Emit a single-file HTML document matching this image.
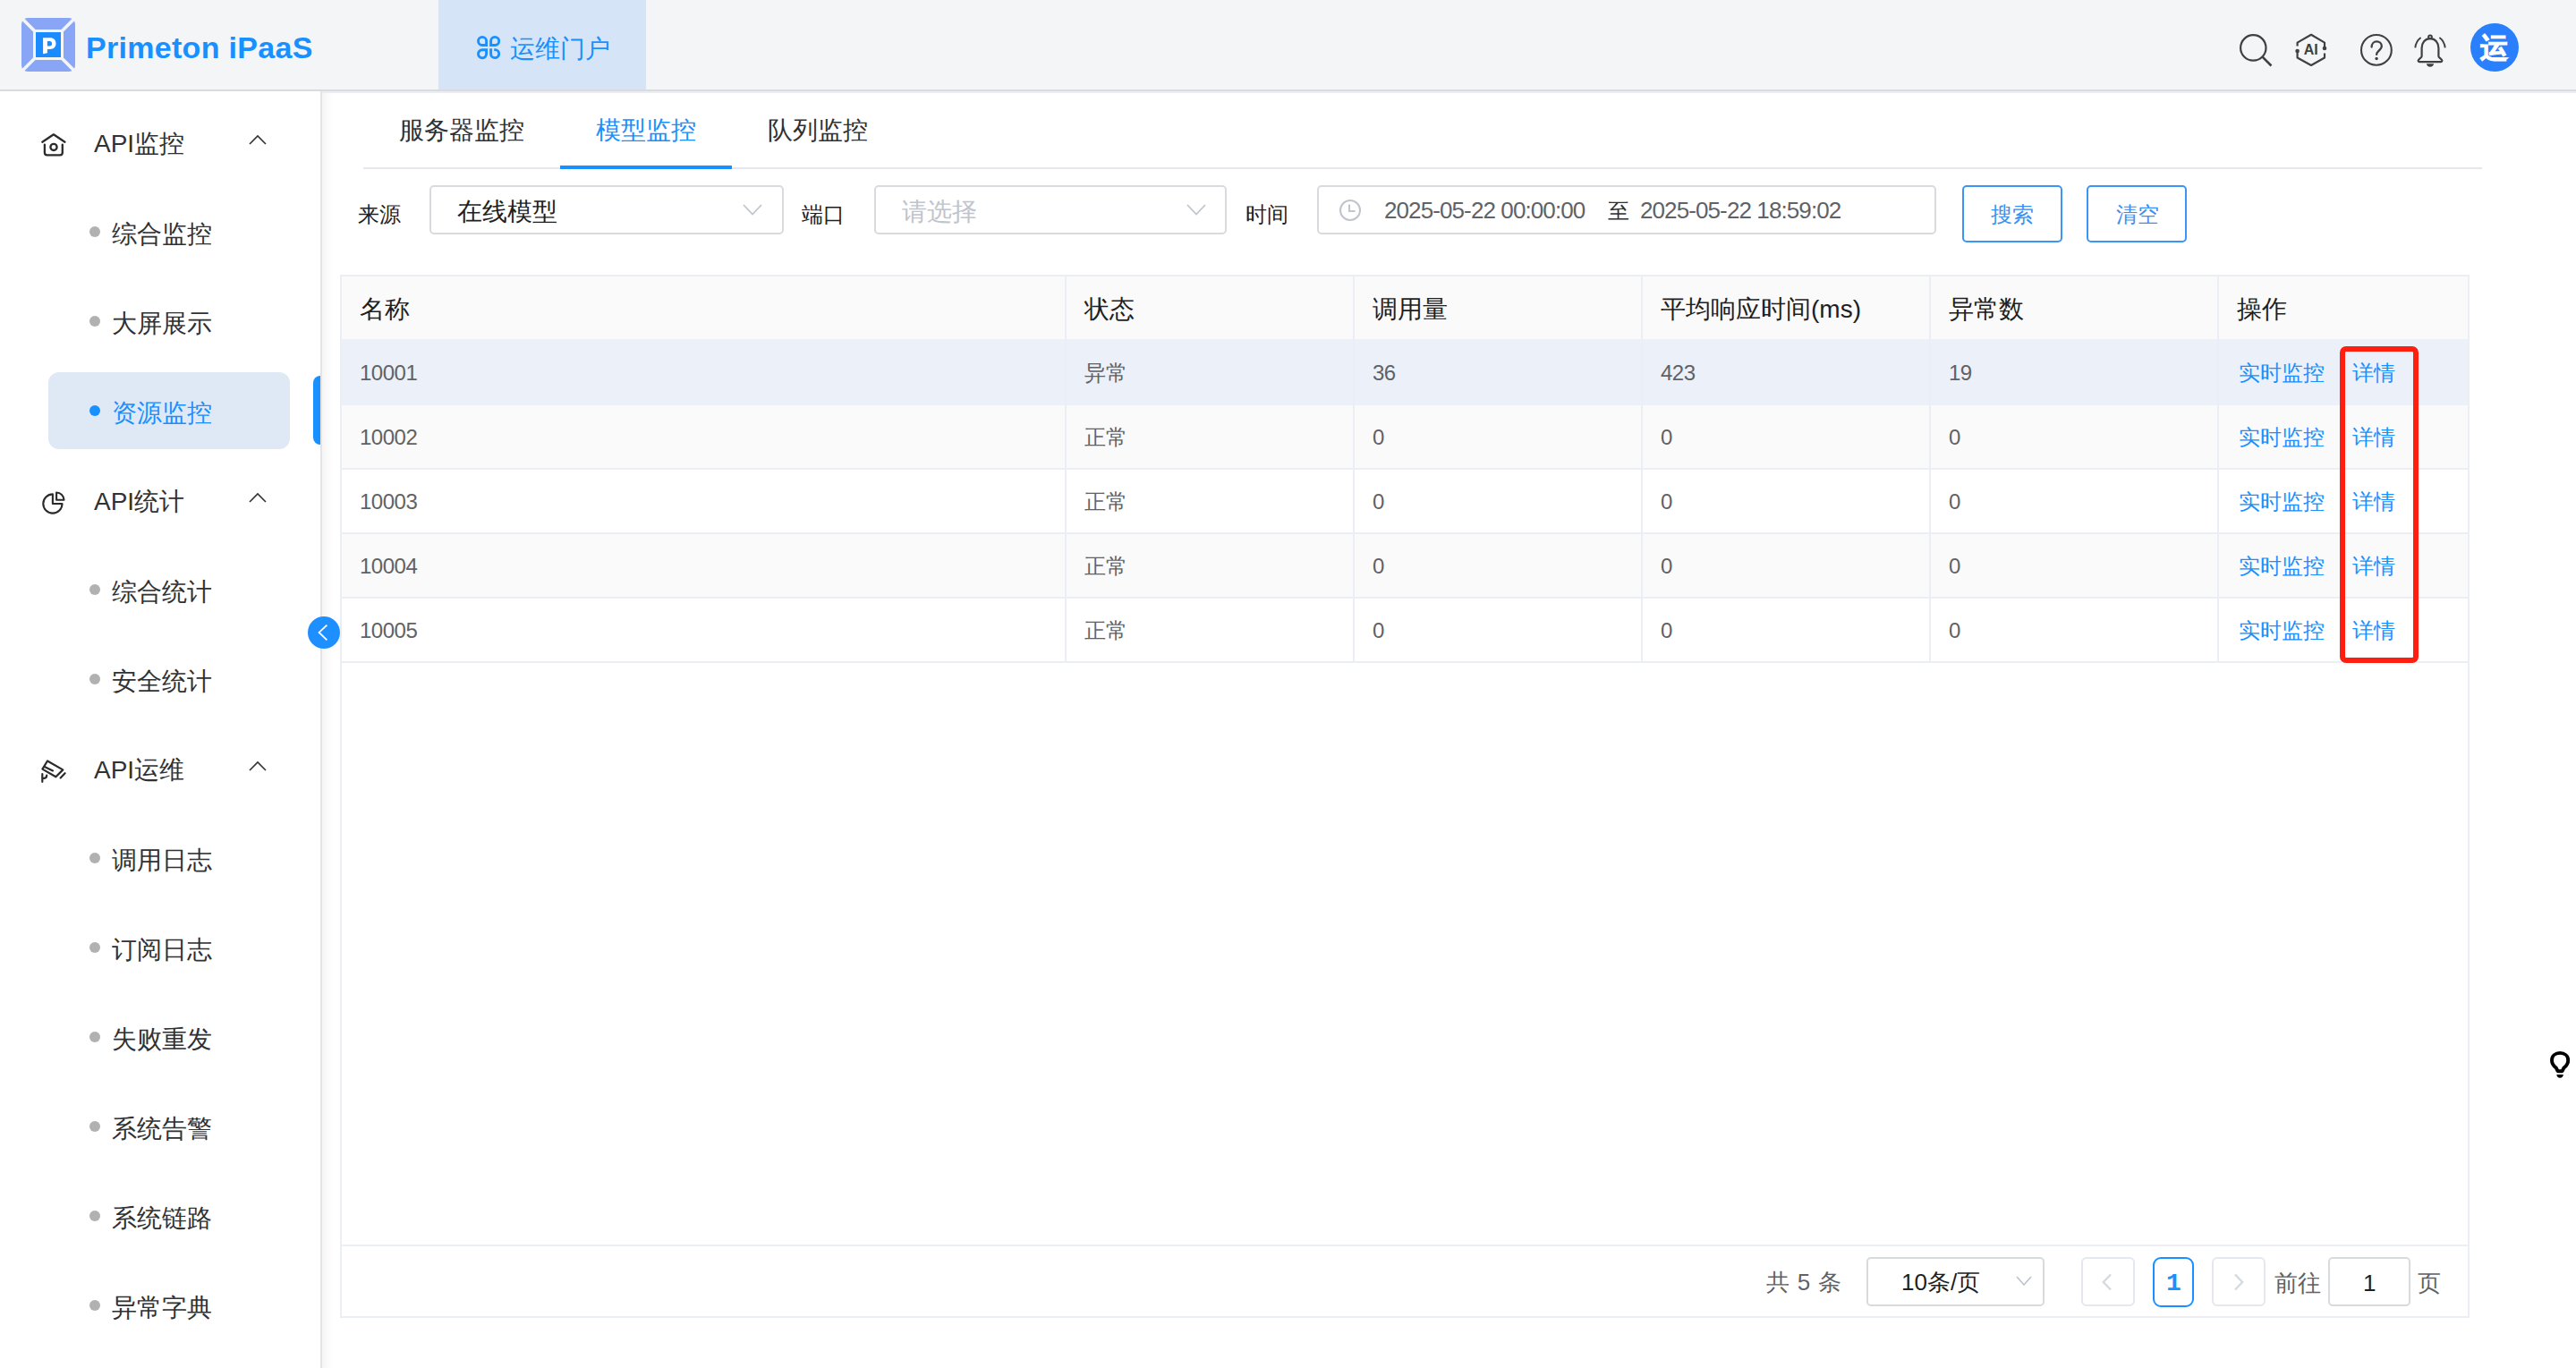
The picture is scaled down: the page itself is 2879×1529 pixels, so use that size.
<!DOCTYPE html>
<html><head><meta charset="utf-8">
<style>
*{box-sizing:border-box;margin:0;padding:0}
html,body{width:2879px;height:1529px;overflow:hidden;background:#fff;font-family:"Liberation Sans",sans-serif;color:#303133}
.a{position:absolute}
.t{position:absolute;white-space:nowrap;line-height:1}
#hdr{left:0;top:0;width:2879px;height:100px;background:#f4f5f7}
#hdrb{left:0;top:100px;width:2879px;height:2px;background:#dadbdd}
#hdrs{left:0;top:102px;width:2879px;height:2px;background:#e9eef6}
#side{left:0;top:102px;width:358px;height:1427px;background:#fff}
#sideb{left:358px;top:102px;width:2px;height:1427px;background:#e4e4e6}
#shadow{left:360px;top:104px;width:12px;height:1425px;background:linear-gradient(to right,#f5f5f6,#fff)}
.mh{font-size:28px;color:#303133}
.mi{font-size:28px;color:#303133}
.dot{position:absolute;width:12px;height:12px;border-radius:6px;background:#b1b1b1}
.chev{position:absolute}
.lbl{font-size:24px;color:#1f1f1f}
.inp{position:absolute;border:2px solid #d8dadd;border-radius:5px;background:#fff}
.cell{font-size:24px;color:#606266;letter-spacing:-0.5px}
.th{font-size:28px;color:#1f1f1f}
.lnk{font-size:24px;color:#1890ff}
.rowb{position:absolute;left:382px;width:2376px;height:2px;background:#ebeef5}
.colb{position:absolute;width:2px;background:#ebeef5}
</style></head><body>
<!-- HEADER -->
<div id="hdr" class="a"></div>
<div id="hdrb" class="a"></div>
<div id="hdrs" class="a"></div>
<svg class="a" style="left:24px;top:20px" width="60" height="60" viewBox="0 0 60 60">
  <rect x="0" y="0" width="60" height="60" rx="7" fill="#89a6f6"/>
  <line x1="0" y1="0" x2="60" y2="60" stroke="#f4f5f7" stroke-width="3.6"/>
  <line x1="60" y1="0" x2="0" y2="60" stroke="#f4f5f7" stroke-width="3.6"/>
  <rect x="13" y="13" width="34" height="34" fill="#f4f5f7"/>
  <rect x="16" y="16" width="28" height="28" fill="#1a8cff"/>
  <path fill-rule="evenodd" d="M24.1 22.3 H32 C36 22.3 38.5 24.6 38.5 28.6 C38.5 32.5 36 35 32 35 H28.9 V39.2 L24.1 40.2 Z M28.9 26 V31.6 H31.3 C33.1 31.6 34.1 30.6 34.1 28.8 C34.1 27 33.1 26 31.3 26 Z" fill="#fff"/>
</svg>
<div class="t" style="left:96px;top:36px;font-size:34px;font-weight:bold;color:#1890ff;letter-spacing:0.3px">Primeton iPaaS</div>

<div class="a" style="left:490px;top:0;width:232px;height:100px;background:#d5e5f7"></div>
<svg class="a" style="left:528px;top:36px" width="36" height="36" viewBox="0 0 36 36" fill="none" stroke="#1890ff" stroke-width="2.9">
  <path d="M15.6 14.45 H11.05 A4.55 4.55 0 1 1 15.6 9.9 Z"/>
  <path d="M20.6 14.45 H25.65 A4.55 4.55 0 1 0 20.6 9.9 Z"/>
  <path d="M15.6 19.7 H11.05 A4.55 4.55 0 1 0 15.6 24.15 Z"/>
  <path d="M20.6 18.3 V24.15 A4.55 4.55 0 1 0 25.65 19.6 H24.2"/>
</svg>
<div class="t" style="left:570px;top:41px;font-size:28px;color:#1890ff">运维门户</div>

<!-- right icons -->
<svg class="a" style="left:2496px;top:32px" width="50" height="50" viewBox="0 0 50 50" fill="none" stroke="#404040" stroke-width="2.2">
  <circle cx="22.3" cy="21.4" r="14.2"/>
  <line x1="32.6" y1="31.6" x2="42.5" y2="41.5" stroke-width="2.6"/>
</svg>
<svg class="a" style="left:2558px;top:32px" width="50" height="50" viewBox="0 0 50 50" fill="none" stroke="#404040" stroke-width="2.2" stroke-linejoin="round">
  <path d="M9.6 19.5 V15.6 L25 6.8 L40 15.6 V21.5"/>
  <path d="M40 27.6 V32.5 L25 41 L9.6 32.5 V26.5"/>
  <circle cx="9.6" cy="25" r="2.3" fill="#404040" stroke="none"/>
  <circle cx="40" cy="22" r="2.3" fill="#404040" stroke="none"/>
  <text x="24.8" y="28.8" text-anchor="middle" font-family="Liberation Sans" font-weight="bold" font-size="16" fill="#404040" stroke="none">AI</text>
</svg>
<svg class="a" style="left:2631px;top:31px" width="50" height="50" viewBox="0 0 50 50" fill="none" stroke="#404040" stroke-width="2.2">
  <circle cx="24.9" cy="24.9" r="16.9" stroke-width="2.1"/>
  <path d="M19.6 21.6 C19.6 18 22 15.4 25.2 15.4 C28.4 15.4 30.8 17.6 30.8 20.6 C30.8 23 28.8 24.8 26.8 26.6 C25.6 27.7 25.1 28.6 25.1 29.9" stroke-width="2.3" stroke-linecap="round"/>
  <circle cx="25.1" cy="34.5" r="1.7" fill="#404040" stroke="none"/>
</svg>
<svg class="a" style="left:2691px;top:31px" width="50" height="50" viewBox="0 0 50 50" fill="none" stroke="#404040" stroke-width="2.2">
  <path d="M25 12.2 c-5.8 0 -9.4 4.6 -9.4 10.6 v9.2 c0 1.6 -3.9 3.2 -3.9 4.6 c0 1 0.7 1.6 1.6 1.6 h23.4 c0.9 0 1.6 -0.6 1.6 -1.6 c0 -1.4 -3.9 -3 -3.9 -4.6 v-9.2 c0 -6 -3.6 -10.6 -9.4 -10.6 z"/>
  <circle cx="25" cy="10.3" r="1.9" stroke-width="2"/>
  <path d="M21 40.3 h8 c0 2 -1.8 3.5 -4 3.5 c-2.2 0 -4 -1.5 -4 -3.5 z" fill="#404040" stroke="none"/>
  <path d="M14.6 11 c-3.5 2.6 -5.8 6.5 -6.3 11.3" stroke-width="1.9"/>
  <path d="M35.4 11 c3.5 2.6 5.8 6.5 6.3 11.3" stroke-width="1.9"/>
</svg>
<div class="a" style="left:2761px;top:26px;width:54px;height:54px;border-radius:27px;background:#2a7ffc"></div>
<div class="t" style="left:2772px;top:38px;font-size:31px;font-weight:bold;color:#fff;-webkit-text-stroke:1px #fff">运</div>

<!-- SIDEBAR -->
<div id="side" class="a"></div>
<div id="sideb" class="a"></div>
<div id="shadow" class="a"></div>

<svg class="a" style="left:40px;top:142px" width="40" height="40" viewBox="0 0 40 40" fill="none" stroke="#2b2b2b" stroke-width="2.3" stroke-linejoin="round" stroke-linecap="round">
  <path d="M7.3 16.7 L19.9 8.3 L32.5 16.7"/>
  <path d="M9.9 19.6 V28.6 C9.9 30.2 11 31.4 12.6 31.4 H27.1 C28.7 31.4 29.8 30.2 29.8 28.6 V19.6"/>
  <circle cx="20" cy="22.4" r="3.6"/>
</svg>
<div class="t mh" style="left:105px;top:147px">API监控</div>
<svg class="chev" style="left:277px;top:149px" width="22" height="14" viewBox="0 0 22 14" fill="none" stroke="#333" stroke-width="1.6"><path d="M2 12 L11 3 L20 12"/></svg>

<div class="dot" style="left:100px;top:253px"></div>
<div class="t mi" style="left:125px;top:248px">综合监控</div>
<div class="dot" style="left:100px;top:353px"></div>
<div class="t mi" style="left:125px;top:348px">大屏展示</div>
<div class="a" style="left:54px;top:416px;width:270px;height:86px;border-radius:12px;background:#dfe9f6"></div>
<div class="a" style="left:350px;top:420px;width:8px;height:77px;border-radius:8px 0 0 8px;background:#1890ff"></div>
<div class="dot" style="left:100px;top:453px;background:#1890ff"></div>
<div class="t mi" style="left:125px;top:448px;color:#1890ff">资源监控</div>

<svg class="a" style="left:40px;top:542px" width="40" height="40" viewBox="0 0 40 40" fill="none" stroke="#2b2b2b" stroke-width="2.1" stroke-linejoin="round">
  <path d="M18.9 10.4 A10.6 10.6 0 1 0 29.5 21 H18.9 Z"/>
  <path d="M23.1 8.5 V16.8 H31.5 A8.3 8.3 0 0 0 23.1 8.5 Z"/>
</svg>
<div class="t mh" style="left:105px;top:547px">API统计</div>
<svg class="chev" style="left:277px;top:549px" width="22" height="14" viewBox="0 0 22 14" fill="none" stroke="#333" stroke-width="1.6"><path d="M2 12 L11 3 L20 12"/></svg>
<div class="dot" style="left:100px;top:653px"></div>
<div class="t mi" style="left:125px;top:648px">综合统计</div>
<div class="dot" style="left:100px;top:753px"></div>
<div class="t mi" style="left:125px;top:748px">安全统计</div>

<svg class="a" style="left:40px;top:840px" width="40" height="40" viewBox="0 0 40 40" fill="none" stroke="#2b2b2b" stroke-width="2.2" stroke-linejoin="round" stroke-linecap="round">
  <path d="M13 10.5 L30.3 20.4 L22.4 28.3 L7.4 19.6 Z"/>
  <path d="M9.8 16.9 L19 21.4"/>
  <path d="M7.3 25.2 V33.8 M7.3 29.8 H9.5 C11 29.8 12.2 28.6 12.2 26.6"/>
  <path d="M32.6 24.2 L27.6 29.4"/>
</svg>
<div class="t mh" style="left:105px;top:847px">API运维</div>
<svg class="chev" style="left:277px;top:849px" width="22" height="14" viewBox="0 0 22 14" fill="none" stroke="#333" stroke-width="1.6"><path d="M2 12 L11 3 L20 12"/></svg>
<div class="dot" style="left:100px;top:953px"></div>
<div class="t mi" style="left:125px;top:948px">调用日志</div>
<div class="dot" style="left:100px;top:1053px"></div>
<div class="t mi" style="left:125px;top:1048px">订阅日志</div>
<div class="dot" style="left:100px;top:1153px"></div>
<div class="t mi" style="left:125px;top:1148px">失败重发</div>
<div class="dot" style="left:100px;top:1253px"></div>
<div class="t mi" style="left:125px;top:1248px">系统告警</div>
<div class="dot" style="left:100px;top:1353px"></div>
<div class="t mi" style="left:125px;top:1348px">系统链路</div>
<div class="dot" style="left:100px;top:1453px"></div>
<div class="t mi" style="left:125px;top:1448px">异常字典</div>

<!-- MAIN TABS -->
<div class="a" style="left:406px;top:187px;width:2368px;height:2px;background:#e4e7ed"></div>
<div class="a" style="left:626px;top:185px;width:192px;height:4px;background:#1890ff"></div>
<div class="t" style="left:446px;top:132px;font-size:28px;color:#303133">服务器监控</div>
<div class="t" style="left:666px;top:132px;font-size:28px;color:#1890ff">模型监控</div>
<div class="t" style="left:858px;top:132px;font-size:28px;color:#303133">队列监控</div>

<!-- FILTERS -->
<div class="t lbl" style="left:400px;top:228px">来源</div>
<div class="inp" style="left:480px;top:207px;width:396px;height:55px"></div>
<div class="t" style="left:511px;top:223px;font-size:28px;color:#1f1f1f">在线模型</div>
<svg class="a" style="left:828px;top:226px" width="26" height="18" viewBox="0 0 26 18" fill="none" stroke="#c0c4cc" stroke-width="1.8"><path d="M3 3 L13 13.5 L23 3"/></svg>

<div class="t lbl" style="left:896px;top:228px">端口</div>
<div class="inp" style="left:977px;top:207px;width:394px;height:55px"></div>
<div class="t" style="left:1008px;top:223px;font-size:28px;color:#c0c4cc">请选择</div>
<svg class="a" style="left:1324px;top:226px" width="26" height="18" viewBox="0 0 26 18" fill="none" stroke="#c0c4cc" stroke-width="1.8"><path d="M3 3 L13 13.5 L23 3"/></svg>

<div class="t lbl" style="left:1392px;top:228px">时间</div>
<div class="inp" style="left:1472px;top:207px;width:692px;height:55px"></div>
<svg class="a" style="left:1495px;top:221px" width="28" height="28" viewBox="0 0 28 28" fill="none" stroke="#c0c4cc" stroke-width="2"><circle cx="14" cy="14" r="11"/><path d="M13 7.5 V15 H19.5"/></svg>
<div class="t" style="left:1547px;top:222px;font-size:26px;color:#606266;letter-spacing:-0.9px">2025-05-22 00:00:00</div>
<div class="t" style="left:1797px;top:224px;font-size:24px;color:#303133">至</div>
<div class="t" style="left:1833px;top:222px;font-size:26px;color:#606266;letter-spacing:-0.9px">2025-05-22 18:59:02</div>

<div class="a" style="left:2193px;top:207px;width:112px;height:64px;border:2px solid #3a95f7;border-radius:5px"></div>
<div class="t" style="left:2225px;top:228px;font-size:24px;color:#3a90f2">搜索</div>
<div class="a" style="left:2332px;top:207px;width:112px;height:64px;border:2px solid #3a95f7;border-radius:5px"></div>
<div class="t" style="left:2365px;top:228px;font-size:24px;color:#3a90f2">清空</div>

<!-- TABLE -->
<div class="a" style="left:380px;top:307px;width:2380px;height:1166px;border:2px solid #ebeef5;background:#fff"></div>
<div class="a" style="left:382px;top:309px;width:2376px;height:70px;background:#fafafa"></div>
<div class="a" style="left:382px;top:379px;width:2376px;height:74px;background:#ecf0f8"></div>
<div class="a" style="left:382px;top:453px;width:2376px;height:70px;background:#fafafa"></div>
<div class="a" style="left:382px;top:597px;width:2376px;height:70px;background:#fafafa"></div>
<div class="rowb" style="top:523px"></div>
<div class="rowb" style="top:595px"></div>
<div class="rowb" style="top:667px"></div>
<div class="rowb" style="top:739px"></div>
<div class="rowb" style="top:1391px"></div>
<div class="colb" style="left:1190px;top:309px;height:430px"></div>
<div class="colb" style="left:1512px;top:309px;height:430px"></div>
<div class="colb" style="left:1834px;top:309px;height:430px"></div>
<div class="colb" style="left:2156px;top:309px;height:430px"></div>
<div class="colb" style="left:2478px;top:309px;height:430px"></div>

<div class="t th" style="left:402px;top:332px">名称</div>
<div class="t th" style="left:1212px;top:332px">状态</div>
<div class="t th" style="left:1534px;top:332px">调用量</div>
<div class="t th" style="left:1856px;top:332px">平均响应时间(ms)</div>
<div class="t th" style="left:2178px;top:332px">异常数</div>
<div class="t th" style="left:2500px;top:332px">操作</div>

<div class="t cell" style="left:402px;top:405px">10001</div>
<div class="t cell" style="left:1212px;top:405px">异常</div>
<div class="t cell" style="left:1534px;top:405px">36</div>
<div class="t cell" style="left:1856px;top:405px">423</div>
<div class="t cell" style="left:2178px;top:405px">19</div>
<div class="t lnk" style="left:2502px;top:405px">实时监控</div>
<div class="t lnk" style="left:2629px;top:405px">详情</div>
<div class="t cell" style="left:402px;top:477px">10002</div>
<div class="t cell" style="left:1212px;top:477px">正常</div>
<div class="t cell" style="left:1534px;top:477px">0</div>
<div class="t cell" style="left:1856px;top:477px">0</div>
<div class="t cell" style="left:2178px;top:477px">0</div>
<div class="t lnk" style="left:2502px;top:477px">实时监控</div>
<div class="t lnk" style="left:2629px;top:477px">详情</div>
<div class="t cell" style="left:402px;top:549px">10003</div>
<div class="t cell" style="left:1212px;top:549px">正常</div>
<div class="t cell" style="left:1534px;top:549px">0</div>
<div class="t cell" style="left:1856px;top:549px">0</div>
<div class="t cell" style="left:2178px;top:549px">0</div>
<div class="t lnk" style="left:2502px;top:549px">实时监控</div>
<div class="t lnk" style="left:2629px;top:549px">详情</div>
<div class="t cell" style="left:402px;top:621px">10004</div>
<div class="t cell" style="left:1212px;top:621px">正常</div>
<div class="t cell" style="left:1534px;top:621px">0</div>
<div class="t cell" style="left:1856px;top:621px">0</div>
<div class="t cell" style="left:2178px;top:621px">0</div>
<div class="t lnk" style="left:2502px;top:621px">实时监控</div>
<div class="t lnk" style="left:2629px;top:621px">详情</div>
<div class="t cell" style="left:402px;top:693px">10005</div>
<div class="t cell" style="left:1212px;top:693px">正常</div>
<div class="t cell" style="left:1534px;top:693px">0</div>
<div class="t cell" style="left:1856px;top:693px">0</div>
<div class="t cell" style="left:2178px;top:693px">0</div>
<div class="t lnk" style="left:2502px;top:693px">实时监控</div>
<div class="t lnk" style="left:2629px;top:693px">详情</div>

<!-- pagination -->
<div class="t" style="left:1974px;top:1420px;font-size:26px;color:#606266;word-spacing:1.5px">共 5 条</div>
<div class="inp" style="left:2086px;top:1405px;width:199px;height:55px"></div>
<div class="t" style="left:2125px;top:1420px;font-size:26px;color:#1f1f1f">10条/页</div>
<svg class="a" style="left:2251px;top:1424px" width="22" height="16" viewBox="0 0 22 16" fill="none" stroke="#c0c4cc" stroke-width="1.8"><path d="M3 3 L11 12 L19 3"/></svg>
<div class="a" style="left:2326px;top:1405px;width:60px;height:55px;border:2px solid #e4e7ed;border-radius:6px"></div>
<svg class="a" style="left:2344px;top:1420px" width="22" height="26" viewBox="0 0 22 26" fill="none" stroke="#d5d9e0" stroke-width="2.4"><path d="M15 4.5 L6.8 13 L15 21.5"/></svg>
<div class="a" style="left:2406px;top:1405px;width:46px;height:56px;border:2px solid #1890ff;border-radius:9px"></div>
<div class="t" style="left:2421px;top:1421px;font-size:28px;font-weight:bold;color:#1890ff;font-family:'Liberation Mono',monospace">1</div>
<div class="a" style="left:2472px;top:1405px;width:60px;height:55px;border:2px solid #e4e7ed;border-radius:6px"></div>
<svg class="a" style="left:2491px;top:1420px" width="22" height="26" viewBox="0 0 22 26" fill="none" stroke="#d5d9e0" stroke-width="2.4"><path d="M7 4.5 L15.2 13 L7 21.5"/></svg>
<div class="t" style="left:2542px;top:1421px;font-size:26px;color:#606266">前往</div>
<div class="inp" style="left:2602px;top:1405px;width:92px;height:55px"></div>
<div class="t" style="left:2641px;top:1421px;font-size:26px;color:#1f1f1f">1</div>
<div class="t" style="left:2702px;top:1421px;font-size:26px;color:#606266">页</div>

<!-- collapse -->
<div class="a" style="left:344px;top:689px;width:36px;height:36px;border-radius:18px;background:#1e8fff"></div>
<svg class="a" style="left:344px;top:689px" width="36" height="36" viewBox="0 0 36 36" fill="none" stroke="#fff" stroke-width="1.8"><path d="M21.4 9.6 L12.6 17.9 L21.4 26.3"/></svg>

<!-- bulb -->
<svg class="a" style="left:2840px;top:1168px" width="40" height="44" viewBox="0 0 40 44" fill="none" stroke="#000" stroke-width="3.9" stroke-linejoin="round">
  <path d="M18.6 29.2 L16.8 25.6 C13.8 23.2 12 20.6 12 17.2 C12 12.1 16 8.9 21.1 8.9 C26.2 8.9 30.2 12.1 30.2 17.2 C30.2 20.6 28.4 23.2 25.4 25.6 L23.6 29.2 Z"/>
  <path d="M17.4 33 H24.8 C24.8 35.3 23.2 36.7 21.1 36.7 C19 36.7 17.4 35.3 17.4 33 Z" fill="#000" stroke="none"/>
</svg>

<!-- red box -->
<div class="a" style="left:2615px;top:387px;width:88px;height:354px;border:6px solid #fe1f10;border-radius:7px"></div>
</body></html>
